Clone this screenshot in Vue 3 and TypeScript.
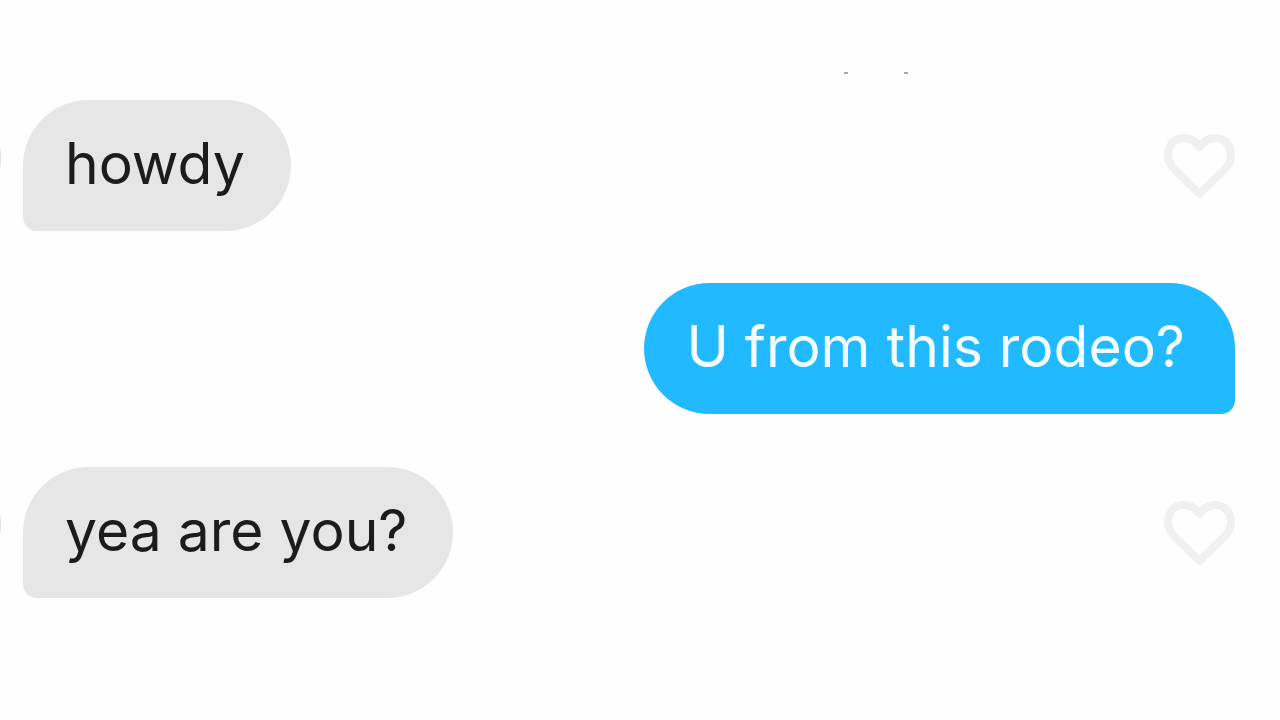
<script setup lang="ts">
interface Message {
  id: number
  text: string
  mine: boolean
}

const messages: Message[] = [
  { id: 1, text: 'howdy', mine: false },
  { id: 2, text: 'U from this rodeo?', mine: true },
  { id: 3, text: 'yea are you?', mine: false },
]
</script>

<template>
  <main class="chat">
    <div class="stamp" aria-hidden="true"><i></i><i></i></div>
    <div v-for="m in messages" :key="m.id" class="row" :class="{ mine: m.mine }">
      <span v-if="!m.mine" class="avatar" aria-hidden="true"></span>
      <p class="bubble">{{ m.text }}</p>
      <button v-if="!m.mine" class="like" type="button" aria-label="Like message">
        <svg viewBox="0 0 72 66" width="72" height="66" aria-hidden="true">
          <path
            d="M36.500 14 C32 8 28 5 20 5 C11 5 5 13 5 22 C5 29 8 33 12 37 L36.500 61 L61 37 C65 33 68 29 68 22 C68 13 62 5 53 5 C45 5 41 8 36.500 14 Z"
            fill="none"
            stroke="#f0f0f0"
            stroke-width="8"
            stroke-linejoin="round"
          />
        </svg>
      </button>
    </div>
  </main>
</template>

<style>
body {
  margin: 0;
  background: #fefefe;
}
</style>

<style scoped>
.chat {
  box-sizing: border-box;
  min-height: 100vh;
  padding: 72px 45px 0 0;
  overflow: hidden;
  background: #fefefe;
  font-family: Inter, "Liberation Sans", sans-serif;
}

.stamp {
  display: flex;
  justify-content: flex-end;
  gap: 56px;
  height: 28px;
  padding-right: 327px;
}

.stamp i {
  width: 4px;
  height: 2px;
  background: #a8a8a8;
}

.row {
  display: flex;
  align-items: center;
  margin-bottom: 52px;
}

.row.mine {
  justify-content: flex-end;
  margin-bottom: 53px;
}

.avatar {
  flex: none;
  align-self: flex-start;
  width: 116px;
  height: 116px;
  margin: 0 22px 0 -115px;
  border-radius: 50%;
  background: #e0e0e0;
}

.bubble {
  box-sizing: border-box;
  margin: 0;
  padding: 28px 46px 31px 42px;
  border-radius: 66px 66px 66px 14px;
  background: #e6e6e6;
  color: #1c1c1c;
  font-size: 57px;
  line-height: 72px;
}

.mine .bubble {
  padding: 28px 50px 31px 42px;
  border-radius: 66px 66px 14px 66px;
  background: #21b9ff;
  color: #f2fdff;
}

.like {
  display: block;
  margin: 0 0 0 auto;
  padding: 0;
  border: 0;
  background: none;
  cursor: pointer;
}

.like svg {
  display: block;
}
</style>
